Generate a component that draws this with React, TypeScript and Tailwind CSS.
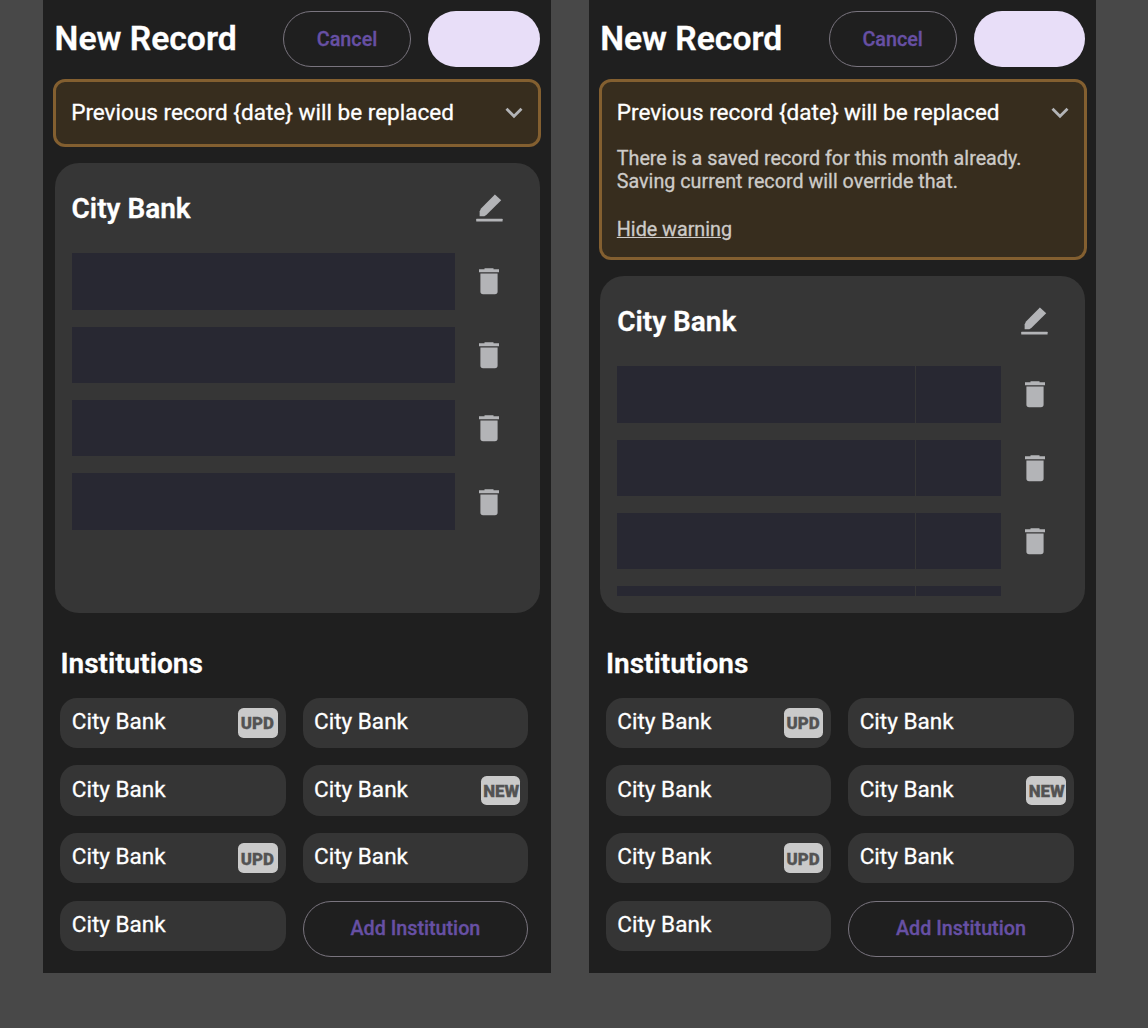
import type { ReactNode } from "react";

function EditIcon() {
  return (
    <svg className="size-[34px] text-[#b3b4b7]" viewBox="0 0 34 34" fill="currentColor">
      <path d="M22.900 3.500L29.200 9.300L14.300 24L12.300 25.200H7.600V20.400L9 17.400Z" />
      <rect x="4.200" y="27.700" width="26.400" height="2.700" rx="0.500" />
    </svg>
  );
}

function TrashIcon() {
  return (
    <svg className="size-[34px] shrink-0 text-[#b3b4b7]" viewBox="0 0 34 34" fill="currentColor">
      <path d="M12.500 4.200h9v1h5.500v3.100H7V5.200h5.500z" />
      <path d="M8.400 9.500h17.200V27.500a2.700 2.700 0 0 1-2.700 2.700H11.100a2.700 2.700 0 0 1-2.700-2.700z" />
    </svg>
  );
}

function Chevron() {
  return (
    <svg className="mt-px h-[12px] w-[18px] shrink-0" viewBox="0 0 18 12" fill="none" stroke="#b3b4b7" strokeWidth="2.800">
      <path d="M1.500 1.800L9 9.300L16.500 1.800" />
    </svg>
  );
}

function Chip({ badge }: { badge?: string }) {
  return (
    <div className="flex h-[50.400px] items-center justify-between rounded-[17px] bg-[#353535] pl-[11.300px] pr-[8px]">
      <span className="-mt-[1.400px] text-[22.560px] leading-[26px] text-white">City Bank</span>
      {badge && (
        <span className="flex h-[29.600px] w-[39.500px] items-center whitespace-nowrap rounded-[5.600px] bg-[#cacaca] pl-[2.600px] pt-[1px] text-[16.900px] font-black leading-[20px] text-[#535353]">
          {badge}
        </span>
      )}
    </div>
  );
}

function Panel({ warning, rows, split, children }: { warning: ReactNode; rows: number; split?: boolean; children?: ReactNode }) {
  return (
    <section className="flex h-[973.300px] w-[507.600px] shrink-0 flex-col bg-[#1f1f1f] px-[11.300px] pt-[11px]">
      <header className="flex h-[56.400px] shrink-0 items-center">
        <h1 className="flex-1 text-[33.700px] font-semibold leading-[40px] text-white">New Record</h1>
        <button className="h-[56.400px] w-[128px] rounded-full border border-[#79747e] pt-px text-[19.740px] font-medium text-[#6750a4]">Cancel</button>
        <button aria-label="Save" className="ml-[17px] h-[56.400px] w-[111.500px] rounded-full bg-[#e8def8]" />
      </header>
      <div className="-mx-[1.400px] mt-[11.300px] shrink-0 rounded-[12px] border-[3px] border-[#835f30] bg-[#372d1e] px-[15px]">
        {warning}
        {children}
      </div>
      <div className="mt-[16px] flex min-h-0 flex-1 flex-col rounded-[24px] bg-[#363636] px-[17px] pb-[17px]">
        <div className="flex h-[90px] shrink-0 items-center justify-between pr-[17px]">
          <h2 className="pt-px text-[28px] font-semibold leading-[34px] text-white">City Bank</h2>
          <EditIcon />
        </div>
        <div className="flex min-h-0 flex-col gap-[17px] overflow-hidden">
          {Array.from({ length: rows }, (_, i) => (
            <div key={i} className="flex h-[56.400px] shrink-0 items-center gap-[17px]">
              <div className="flex h-full w-[383.500px] gap-px">
                <div className="flex-1 bg-[#282832]" />
                {split && <div className="w-[85px] bg-[#282832]" />}
              </div>
              <TrashIcon />
            </div>
          ))}
        </div>
      </div>
      <div className="h-[360.700px] shrink-0 px-[5.900px] pt-[34px]">
        <h2 className="text-[28px] font-semibold leading-[34px] text-white">Institutions</h2>
        <div className="mt-[17px] grid grid-cols-[225.300px_225.300px] gap-x-[17px] gap-y-[17.300px]">
          <Chip badge="UPD" />
          <Chip />
          <Chip />
          <Chip badge="NEW" />
          <Chip badge="UPD" />
          <Chip />
          <Chip />
          <button className="h-[56.400px] rounded-full border border-[#79747e] text-[19.740px] font-medium text-[#6750a4]">Add Institution</button>
        </div>
      </div>
    </section>
  );
}

function WarningTitle({ className }: { className: string }) {
  return (
    <div className={className}>
      <span className="whitespace-nowrap pt-px text-[22.560px] leading-[26px] text-white">Previous record {"{date}"} will be replaced</span>
      <Chevron />
    </div>
  );
}

export default function App() {
  return (
    <main className="flex h-[1028px] w-[1148px] gap-[38px] overflow-hidden bg-[#484848] pl-[43.250px] font-['Roboto',sans-serif] [-webkit-text-stroke:0.300px]">
      <Panel rows={4} warning={<WarningTitle className="flex h-[62.500px] items-center justify-between" />} />
      <Panel rows={4} split warning={<WarningTitle className="flex h-[61.500px] items-center justify-between" />}>
        <p className="mt-[3.500px] text-[19.740px] leading-[23px] text-[#cdcbc8]">
          There is a saved record for this month already.
          <br />
          Saving current record will override that.
        </p>
        <div className="mt-[25px] h-[39.500px] text-[19.740px] leading-[23px] text-[#cdcbc8] underline">Hide warning</div>
      </Panel>
    </main>
  );
}
